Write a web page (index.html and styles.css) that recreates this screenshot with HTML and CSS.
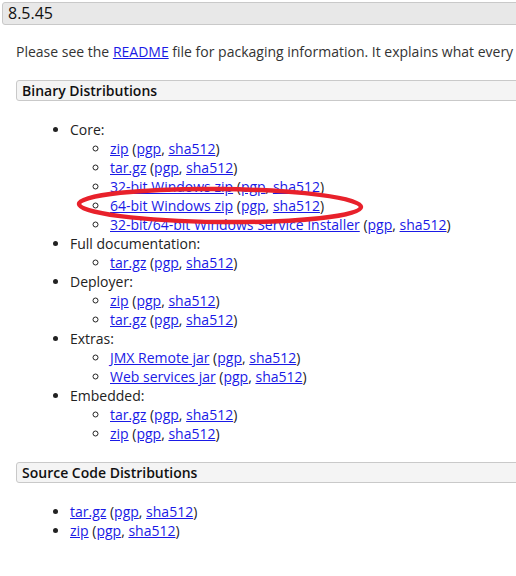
FILE: index.html
```html
<!DOCTYPE html>
<html>
<head>
<meta charset="utf-8">
<link rel="stylesheet" href="styles.css">
</head>
<body>
<div class="page">
  <h3 class="version">8.5.45</h3>
  <div class="content">
    <p class="intro">Please see the <a href="#">README</a> file for packaging information. It explains what every</p>

    <h4 class="section">Binary Distributions</h4>
    <ul class="list">
      <li>Core:
        <ul class="sub">
          <li><a href="#">zip</a> (<a href="#">pgp</a>, <a href="#">sha512</a>)</li>
          <li><a href="#">tar.gz</a> (<a href="#">pgp</a>, <a href="#">sha512</a>)</li>
          <li><a href="#">32-bit Windows zip</a> (<a href="#">pgp</a>, <a href="#">sha512</a>)</li>
          <li><a href="#">64-bit Windows zip</a> (<a href="#">pgp</a>, <a href="#">sha512</a>)</li>
          <li><a href="#">32-bit/64-bit Windows Service Installer</a> (<a href="#">pgp</a>, <a href="#">sha512</a>)</li>
        </ul>
      </li>
      <li>Full documentation:
        <ul class="sub">
          <li><a href="#">tar.gz</a> (<a href="#">pgp</a>, <a href="#">sha512</a>)</li>
        </ul>
      </li>
      <li>Deployer:
        <ul class="sub">
          <li><a href="#">zip</a> (<a href="#">pgp</a>, <a href="#">sha512</a>)</li>
          <li><a href="#">tar.gz</a> (<a href="#">pgp</a>, <a href="#">sha512</a>)</li>
        </ul>
      </li>
      <li>Extras:
        <ul class="sub">
          <li><a href="#">JMX Remote jar</a> (<a href="#">pgp</a>, <a href="#">sha512</a>)</li>
          <li><a href="#">Web services jar</a> (<a href="#">pgp</a>, <a href="#">sha512</a>)</li>
        </ul>
      </li>
      <li>Embedded:
        <ul class="sub">
          <li><a href="#">tar.gz</a> (<a href="#">pgp</a>, <a href="#">sha512</a>)</li>
          <li><a href="#">zip</a> (<a href="#">pgp</a>, <a href="#">sha512</a>)</li>
        </ul>
      </li>
    </ul>

    <h4 class="section">Source Code Distributions</h4>
    <ul class="list">
      <li><a href="#">tar.gz</a> (<a href="#">pgp</a>, <a href="#">sha512</a>)</li>
      <li><a href="#">zip</a> (<a href="#">pgp</a>, <a href="#">sha512</a>)</li>
    </ul>
  </div>
</div>
<svg class="mark" width="516" height="576" viewBox="0 0 516 576">
  <ellipse cx="220" cy="205.5" rx="141" ry="16.5" fill="none" stroke="#e8212b" stroke-width="4.5" transform="rotate(0.6 220 205.5)"/>
</svg>
</body>
</html>
```

FILE: styles.css
```css
html, body {
  margin: 0;
  padding: 0;
  overflow: hidden;
  background: #fff;
}
body {
  width: 516px;
  height: 576px;
  position: relative;
  font-family: "Open Sans", "DejaVu Sans", sans-serif;
  font-size: 14px;
  line-height: 19px;
  color: #222;
}
.page {
  width: 700px;
  padding: 2px 0 0 2px;
}
.version {
  margin: 0;
  height: 21px;
  line-height: 21px;
  padding: 0 5px;
  font-size: 16px;
  font-weight: 500;
  color: #111;
  background: #e8e8e8;
  border: 1px solid #c9c9c9;
  border-radius: 3px;
}
.content {
  padding-left: 14px;
}
.intro {
  margin: 17px 0 19px 0;
  white-space: nowrap;
  color: #333;
}
a {
  color: #1a1ae6;
  text-decoration: underline;
}
.section {
  margin: 0;
  height: 19px;
  line-height: 19px;
  padding: 0 5px;
  font-size: 14px;
  font-weight: 600;
  color: #111;
  background: #f4f4f4;
  border: 1px solid #c9c9c9;
  border-radius: 3px;
}
.list {
  margin: 19px 0 19px 0;
  padding-left: 54px;
  list-style: disc;
}
.sub {
  margin: 0;
  padding-left: 40px;
  list-style: circle;
}
.mark {
  position: absolute;
  left: 0;
  top: 0;
  pointer-events: none;
}
```
